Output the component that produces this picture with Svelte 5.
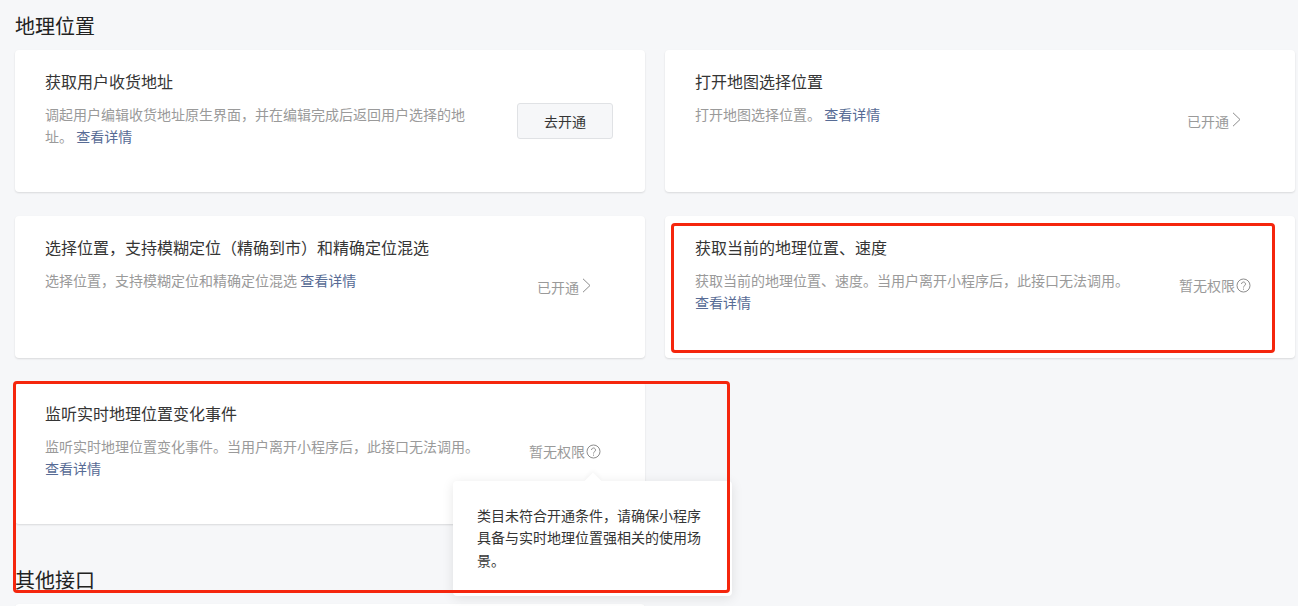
<script>
	const cards = [
		{
			title: '获取用户收货地址',
			desc: '调起用户编辑收货地址原生界面，并在编辑完成后返回用户选择的地址。',
			status: 'open'
		},
		{ title: '打开地图选择位置', desc: '打开地图选择位置。', status: 'done' },
		{
			title: '选择位置，支持模糊定位（精确到市）和精确定位混选',
			desc: '选择位置，支持模糊定位和精确定位混选',
			status: 'done'
		},
		{
			title: '获取当前的地理位置、速度',
			desc: '获取当前的地理位置、速度。当用户离开小程序后，此接口无法调用。',
			status: 'denied'
		},
		{
			title: '监听实时地理位置变化事件',
			desc: '监听实时地理位置变化事件。当用户离开小程序后，此接口无法调用。',
			status: 'denied',
			tip: '类目未符合开通条件，请确保小程序具备与实时地理位置强相关的使用场景。'
		}
	];
</script>

<div class="page">
	<h2 class="section-title">地理位置</h2>
	<div class="grid">
		{#each cards as card}
			<div class="card">
				<div class="main">
					<h3>{card.title}</h3>
					<p class="desc">{card.desc} <a href="#detail">查看详情</a></p>
				</div>
				<div class="action">
					{#if card.status === 'open'}
						<button type="button">去开通</button>
					{:else if card.status === 'done'}
						<span class="state">
							已开通
							<svg class="chevron" width="9" height="15" viewBox="0 0 9 15" fill="none" stroke="#8c8c8c" stroke-width="1">
								<path d="M1 .8 8 7.5l-7 6.7" />
							</svg>
						</span>
					{:else}
						<span class="state tight">
							暂无权限
							<svg width="15" height="15" viewBox="0 0 15 15" fill="none" stroke="#8c8c8c" stroke-width="1">
								<circle cx="7.5" cy="7.5" r="6.5" />
								<path d="M5.5 6a2 2 0 1 1 3.2 1.6c-.8.6-1.2 1-1.2 1.9" />
								<path d="M7.5 10.6v1.1" />
							</svg>
						</span>
					{/if}
				</div>
				{#if card.tip}
					<div class="tooltip">{card.tip}</div>
				{/if}
			</div>
		{/each}
	</div>

	<h2 class="section-title next">其他接口</h2>
	<div class="grid">
		<div class="card"></div>
	</div>

	<div class="mark mark-speed"></div>
	<div class="mark mark-listen"></div>
</div>

<style>
	:global(body) {
		margin: 0;
		background: #f6f7f9;
		overflow: hidden;
	}

	.page {
		position: relative;
		height: 606px;
		overflow: hidden;
		box-sizing: border-box;
		padding: 12px 3px 0 15px;
		font-family: "Noto Sans CJK SC", "Liberation Sans", sans-serif;
		color: #353535;
	}

	.section-title {
		margin: 0 0 10px;
		font-size: 20px;
		line-height: 28px;
		font-weight: 400;
		color: #222;
	}

	.section-title.next {
		margin-top: 42px;
	}

	.grid {
		display: grid;
		grid-template-columns: 1fr 1fr;
		gap: 24px 20px;
	}

	.card {
		position: relative;
		display: flex;
		box-sizing: border-box;
		min-height: 142px;
		padding: 19px 32px 20px 30px;
		background: #fff;
		border-radius: 4px;
		box-shadow: 0 1px 2px rgb(0 0 0 / 0.12);
	}

	.main {
		width: 440px;
		padding-right: 32px;
	}

	h3 {
		margin: 0 0 10px;
		font-size: 16px;
		line-height: 24px;
		font-weight: 400;
		color: #353535;
	}

	.desc {
		margin: 0;
		font-size: 14px;
		line-height: 22px;
		color: #9a9a9a;
	}

	.desc a {
		color: #576b95;
		text-decoration: none;
	}

	.action {
		width: 96px;
		flex: none;
		display: flex;
		align-items: center;
		justify-content: center;
		padding-top: 1px;
	}

	button {
		width: 96px;
		height: 36px;
		padding: 0;
		border: 1px solid #e0e2e5;
		border-radius: 3px;
		background: #f6f7f9;
		font: inherit;
		font-size: 14px;
		color: #353535;
	}

	.state {
		display: flex;
		align-items: center;
		gap: 3px;
		font-size: 14px;
		line-height: 20px;
		color: #9a9a9a;
		white-space: nowrap;
	}

	.chevron {
		margin: 0 2px 3px 0;
	}

	.state.tight {
		gap: 1px;
		margin-bottom: 4px;
	}

	.tooltip {
		position: absolute;
		left: 438px;
		top: 99px;
		width: 279px;
		box-sizing: border-box;
		padding: 23px 24px 25px;
		background: #fff;
		border-radius: 4px;
		box-shadow: 0 2px 12px rgb(0 0 0 / 0.1);
		font-size: 14px;
		line-height: 22.4px;
		color: #353535;
		z-index: 2;
	}

	.tooltip::before {
		content: '';
		position: absolute;
		left: 134px;
		top: -6px;
		width: 12px;
		height: 12px;
		background: #fff;
		transform: rotate(45deg);
		box-shadow: -2px -2px 4px rgb(0 0 0 / 0.03);
	}

	.mark {
		position: absolute;
		box-sizing: border-box;
		border: 3px solid #f5260d;
		border-radius: 4px;
		z-index: 3;
		pointer-events: none;
	}

	.mark-speed {
		left: 671px;
		top: 223px;
		width: 604px;
		height: 130px;
	}

	.mark-listen {
		left: 13px;
		top: 381px;
		width: 717px;
		height: 212px;
	}
</style>
